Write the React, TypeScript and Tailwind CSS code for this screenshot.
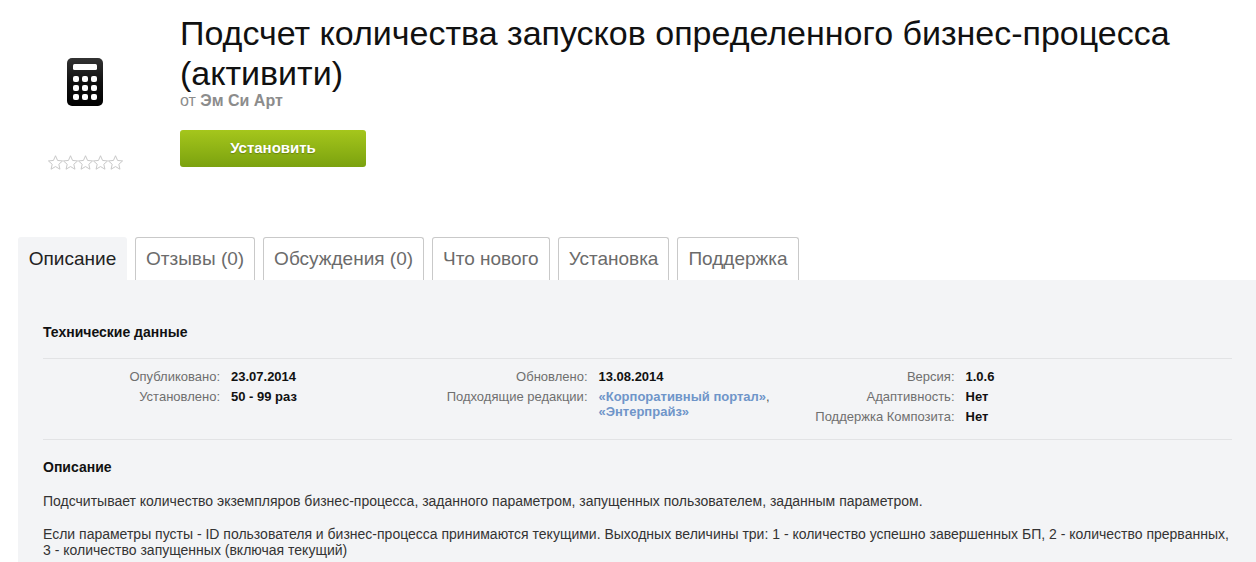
const tabs = ["Отзывы (0)", "Обсуждения (0)", "Что нового", "Установка", "Поддержка"];

const Star = () => (
  <svg width="15" height="15" viewBox="0 0 24 24" fill="#fff" stroke="#c4c4c4" strokeWidth="1.5">
    <path d="M12 1.2l3.3 7.5 8 .8-6 5.3 1.8 7.9-7.1-4.2-7.1 4.2 1.8-7.9-6-5.3 8-.8z" />
  </svg>
);

const CalcIcon = () => (
  <svg width="36" height="48" viewBox="0 0 36 48">
    <defs>
      <linearGradient id="calc" x1="0" y1="0" x2="0" y2="1">
        <stop offset="0" stopColor="#333" />
        <stop offset="0.5" stopColor="#111" />
        <stop offset="1" stopColor="#000" />
      </linearGradient>
    </defs>
    <rect width="36" height="48" rx="5" fill="url(#calc)" />
    <rect x="6" y="6" width="24" height="6" rx="1.5" fill="#fff" />
    {[21, 30, 39].map((y) =>
      [9, 18, 27].map((x) => <rect key={`${x}-${y}`} x={x - 3} y={y - 3} width="6" height="6" rx="2" fill="#fff" />)
    )}
  </svg>
);

const Row = ({ label, children }: { label: string; children: React.ReactNode }) => (
  <div className="flex leading-[15px] mb-[5px]">
    <div className="w-[177px] shrink-0 text-right text-[#6f6f6f]">{label}</div>
    <div className="pl-[11px] font-bold text-[#111]">{children}</div>
  </div>
);

export default function App() {
  return (
    <div className="w-[1256px] h-[562px] overflow-hidden bg-white font-['Liberation_Sans',Arial,sans-serif]">
      <div className="flex h-[237px]">
        <div className="w-[180px] shrink-0 pl-[48px]">
          <div className="pt-[58px] pl-[19px] leading-none">
            <CalcIcon />
          </div>
          <div className="flex mt-[49px]">
            {[0, 1, 2, 3, 4].map((i) => (
              <Star key={i} />
            ))}
          </div>
        </div>
        <div className="flex-1 pt-[13px] pr-[60px]">
          <h1 className="text-[34px] leading-[40px] text-[#111]">
            Подсчет количества запусков определенного бизнес-процесса (активити)
          </h1>
          <div className="text-[16px] leading-[16px] text-[#8c8c8c]">
            от <span className="font-bold">Эм Си Арт</span>
          </div>
          <button className="mt-[21px] block w-[186px] h-[37px] rounded-[3px] bg-gradient-to-b from-[#a5c61c] to-[#7ba20f] text-[15px] font-bold text-white [text-shadow:0_1px_1px_rgba(0,0,0,0.25)]">
            Установить
          </button>
        </div>
      </div>

      <div className="flex ml-[18px] gap-[8px] h-[43px] text-[19px]">
        <div className="w-[109px] flex items-center justify-center bg-[#f3f4f6] border border-b-0 border-transparent rounded-t-[3px] text-[#222]">
          Описание
        </div>
        {tabs.map((t) => (
          <div
            key={t}
            className="px-[10px] flex items-center justify-center border border-b-0 border-[#c9c9c9] rounded-t-[3px] text-[#6b6b6b]"
          >
            {t}
          </div>
        ))}
      </div>

      <div className="ml-[18px] h-[282px] bg-[#f3f4f6] pl-[25px] pr-[24px] text-[14px]">
        <div className="pt-[44px] h-[79px] font-bold text-[#111] leading-[16px] border-b border-[#e2e3e5]">
          Технические данные
        </div>
        <div className="grid grid-cols-[367.5px_367px_1fr] pt-[10px] h-[81px] border-b border-[#e2e3e5] text-[13px]">
          <div>
            <Row label="Опубликовано:">23.07.2014</Row>
            <Row label="Установлено:">50 - 99 раз</Row>
          </div>
          <div>
            <Row label="Обновлено:">13.08.2014</Row>
            <Row label="Подходящие редакции:">
              <span className="text-[#6f95c9]">«Корпоративный портал»</span>
              <span className="font-normal text-[#555]">,</span>
              <br />
              <span className="text-[#6f95c9]">«Энтерпрайз»</span>
            </Row>
          </div>
          <div>
            <Row label="Версия:">1.0.6</Row>
            <Row label="Адаптивность:">Нет</Row>
            <Row label="Поддержка Композита:">Нет</Row>
          </div>
        </div>
        <div className="pt-[19px] font-bold text-[#111] leading-[16px]">Описание</div>
        <p className="mt-[18px] leading-[16px] text-[#333]">
          Подсчитывает количество экземпляров бизнес-процесса, заданного параметром, запущенных пользователем, заданным параметром.
        </p>
        <p className="mt-[17px] leading-[16px] text-[#333]">
          Если параметры пусты - ID пользователя и бизнес-процесса принимаются текущими. Выходных величины три: 1 - количество успешно завершенных БП, 2 - количество прерванных, 3 - количество запущенных (включая текущий)
        </p>
      </div>
    </div>
  );
}
